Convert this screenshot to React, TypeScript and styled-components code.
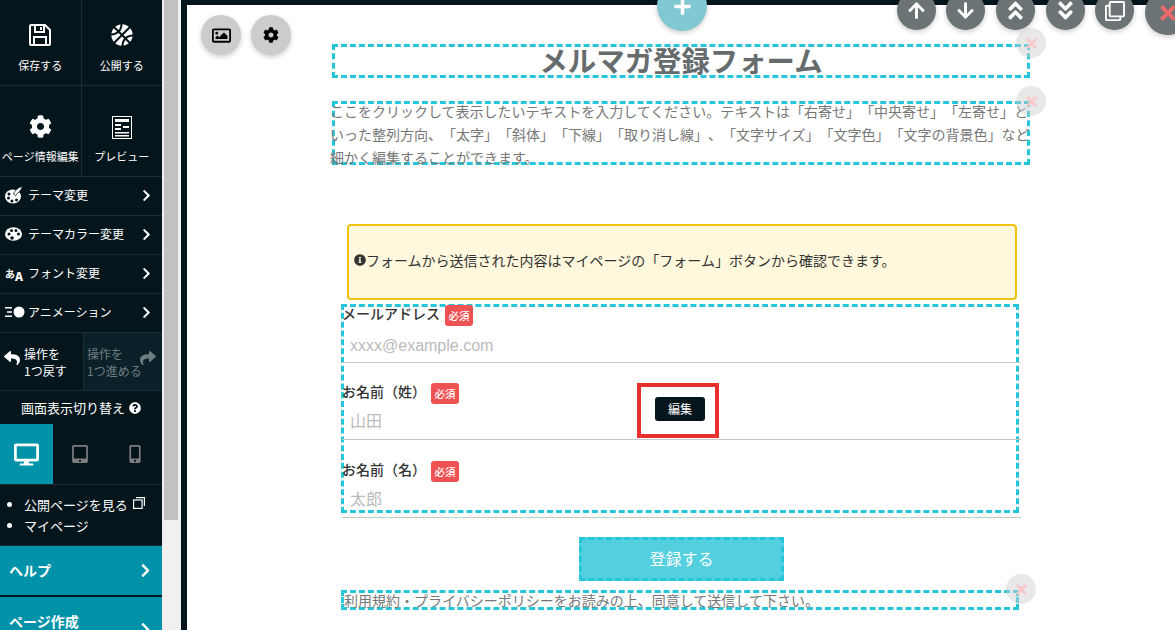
import React from "react";
import styled, { createGlobalStyle } from "styled-components";
import {
  FaAngleDoubleDown,
  FaAngleDoubleUp,
  FaArrowDown,
  FaArrowUp,
  FaBasketballBall,
  FaChevronRight,
  FaCog,
  FaDesktop,
  FaInfoCircle,
  FaMobileAlt,
  FaPlus,
  FaQuestionCircle,
  FaRegClone,
  FaRegImage,
  FaReply,
  FaShare,
  FaTabletAlt,
  FaTimes,
} from "react-icons/fa";

const jp = `"Noto Sans CJK JP", "Liberation Sans", sans-serif`;
const DARK = "#04151c";
const LINE = "#1c2d33";
const TEAL = "#0092a8";
const CYAN = "#26c6da";

const Global = createGlobalStyle`
  html, body { margin: 0; padding: 0; height: 630px; overflow: hidden; background: ${DARK}; }
  * { box-sizing: border-box; }
  body { font-family: ${jp}; text-spacing-trim: space-all; }
`;

const Page = styled.div`
  display: flex;
  width: 1175px;
  height: 630px;
  overflow: hidden;
  background: ${DARK};
`;

const Sidebar = styled.nav`
  width: 162px;
  flex: none;
  height: 630px;
  overflow: hidden;
  color: #fff;
  display: flex;
  flex-direction: column;
`;

const Track = styled.div`
  width: 19px;
  flex: none;
  background: #f0f0f0;
  padding-left: 2px;
`;

const Thumb = styled.div`
  width: 14px;
  height: 520px;
  background: #c1c1c1;
`;

const TileRow = styled.div<{ $h: number }>`
  display: flex;
  height: ${(p) => p.$h}px;
  flex: none;
  border-bottom: 1px solid ${LINE};
`;

const Tile = styled.button`
  flex: 1;
  min-width: 0;
  background: none;
  border: 0;
  padding: 0;
  color: #fff;
  font: 11px/16px ${jp};
  display: flex;
  flex-direction: column;
  align-items: center;
  justify-content: flex-end;
  white-space: nowrap;
  & + & { border-left: 1px solid ${LINE}; }
`;

const TileIcon = styled.span<{ $pb: number }>`
  display: flex;
  margin-bottom: ${(p) => p.$pb}px;
`;

const TileLabel = styled.span`
  padding-bottom: 12px;
`;

const MenuRow = styled.div`
  height: 39px;
  flex: none;
  display: flex;
  align-items: center;
  padding: 0 9px 2px 5px;
  font-size: 12px;
  line-height: 16px;
  border-bottom: 1px solid ${LINE};
`;

const MenuIcon = styled.span`
  width: 23px;
  flex: none;
  display: flex;
`;

const LangIcon = styled.span`
  width: 23px;
  flex: none;
  font-size: 10px;
  font-weight: 700;
  line-height: 12px;
  & b { font-size: 12px; position: relative; top: 3px; }
`;

const MenuText = styled.span`
  flex: 1;
`;

const Chevron = styled(FaChevronRight)`
  font-size: 13px;
`;

const HistoryRow = styled.div`
  display: flex;
  height: 58px;
  flex: none;
  border-bottom: 1px solid ${LINE};
`;

const HistoryButton = styled.div<{ $off?: boolean }>`
  flex: 1;
  width: 81px;
  display: flex;
  align-items: center;
  gap: ${(p) => (p.$off ? "0" : "4px")};
  padding: 0 ${(p) => (p.$off ? "0 0 3px" : "4px")};
  font-size: 12px;
  line-height: 17px;
  white-space: nowrap;
  color: ${(p) => (p.$off ? "#6f7c80" : "#fff")};
  background: ${(p) => (p.$off ? "#0b2129" : "transparent")};
  & + & { border-left: 1px solid ${LINE}; }
  & svg {
    font-size: 16px;
    flex: none;
    margin: ${(p) => (p.$off ? "-8px 0 0 -2px" : "-8px 0 0 0")};
  }
`;

const ViewTitle = styled.div`
  height: 33px;
  flex: none;
  display: flex;
  align-items: center;
  justify-content: center;
  gap: 4px;
  font-size: 13px;
  & svg { font-size: 12px; }
`;

const DeviceRow = styled.div`
  display: flex;
  height: 61px;
  flex: none;
  border-bottom: 1px solid ${LINE};
`;

const Device = styled.div<{ $active?: boolean }>`
  flex: none;
  width: ${(p) => (p.$active ? "53px" : "54.5px")};
  display: flex;
  align-items: center;
  justify-content: center;
  background: ${(p) => (p.$active ? TEAL : "transparent")};
  color: ${(p) => (p.$active ? "#fff" : "#7d7d7d")};
  & svg { font-size: ${(p) => (p.$active ? "25px" : "18px")}; }
`;

const LinkList = styled.ul`
  margin: 0;
  padding: 9px 0 0 24px;
  height: 61px;
  flex: none;
  font-size: 13px;
  line-height: 21px;
  border-bottom: 1px solid ${LINE};
`;

const LinkItem = styled.li`
  white-space: nowrap;
  & svg { margin-left: 5px; vertical-align: 1px; }
`;

const TealRow = styled.div<{ $h: number }>`
  height: ${(p) => p.$h}px;
  flex: none;
  background: ${TEAL};
  margin-bottom: 2px;
  display: flex;
  align-items: center;
  justify-content: space-between;
  padding: 0 9px 0 9px;
  font-size: 14px;
  font-weight: 700;
`;

const TealLabel = styled.span<{ $lift: number }>`
  margin-bottom: ${(p) => p.$lift}px;
`;

const TealChevron = styled(FaChevronRight)`
  font-size: 15px;
`;

const Main = styled.main`
  position: relative;
  margin: 5px 0 0 6px;
  flex: 1;
  height: 625px;
  background: #fff;
  display: flex;
  flex-direction: column;
  align-items: center;
`;

const Column = styled.div`
  width: 698px;
  display: flex;
  flex-direction: column;
`;

const Dashed = styled.div`
  border: 3px dashed ${CYAN};
`;

const TitleBox = styled(Dashed)`
  margin-top: 39px;
  height: 34px;
  text-align: center;
`;

const Title = styled.h1`
  margin: -2px -20px 0;
  font: 700 28.4px/29px ${jp};
  color: #666c6e;
`;

const TextBox = styled(Dashed)`
  margin-top: 23px;
  height: 64px;
`;

const BodyText = styled.p`
  margin: -4px -5px 0 -5px;
  font-size: 14px;
  line-height: 23px;
  color: #777;
`;

const Notice = styled.div`
  margin: 59px 13px 0 15px;
  height: 76px;
  background: #fff8dc;
  border: 2px solid #f1c40f;
  border-radius: 4px;
  display: flex;
  align-items: center;
  padding: 0 5px 4px;
  font-size: 14px;
  color: #333;
  & svg { font-size: 12px; flex: none; }
`;

const FormBox = styled(Dashed)`
  margin: 4px 11px 0 9px;
  height: 209px;
`;

const Field = styled.div<{ $h: number; $pt: number; $mt: number }>`
  height: ${(p) => p.$h}px;
  padding-top: ${(p) => p.$pt}px;
  margin: ${(p) => p.$mt}px -5px 0 -2px;
  border-bottom: 1px solid #c8c8c8;
`;

const FieldLabel = styled.div<{ $gap: number }>`
  display: flex;
  align-items: flex-start;
  gap: 5px;
  height: 21px;
  margin-bottom: ${(p) => p.$gap}px;
  font-size: 14px;
  line-height: 17px;
  font-weight: 500;
  color: #333;
`;

const Required = styled.span`
  width: 28px;
  height: 21px;
  border-radius: 3px;
  background: #ee5253;
  color: #fff;
  font-size: 10.5px;
  display: flex;
  align-items: center;
  justify-content: center;
`;

const FieldInput = styled.input`
  display: block;
  width: 100%;
  height: 28px;
  padding: 0 8px;
  border: 0;
  background: transparent;
  font: 16px/24px "Liberation Sans", ${jp};
  &::placeholder { color: #bbb; opacity: 1; }
`;

const Submit = styled.button`
  align-self: center;
  margin: 24px 0 0 1px;
  width: 205px;
  height: 44px;
  padding: 0 0 3px;
  background: #53cfdf;
  border: 3px dashed ${CYAN};
  color: #fff;
  font: 16px/24px ${jp};
`;

const Terms = styled(Dashed)`
  margin: 9px 11px 0 9px;
  height: 20px;
  font-size: 14px;
  line-height: 14px;
  color: #777;
  white-space: nowrap;
`;

const Fab = styled.button<{ $x: number; $y: number; $d: number; $bg: string; $fg: string; $fs: number; $flat?: boolean }>`
  position: absolute;
  left: ${(p) => p.$x - 187}px;
  top: ${(p) => p.$y - 5}px;
  width: ${(p) => p.$d}px;
  height: ${(p) => p.$d}px;
  border-radius: 50%;
  border: 0;
  padding: 0;
  display: flex;
  align-items: center;
  justify-content: center;
  background: ${(p) => p.$bg};
  color: ${(p) => p.$fg};
  font-size: ${(p) => p.$fs}px;
  box-shadow: ${(p) => (p.$flat ? "none" : "0 2px 5px rgba(0,0,0,0.2)")};
`;

const TopCover = styled.div`
  position: absolute;
  left: 0;
  right: 0;
  top: -5px;
  height: 5px;
  background: rgba(4, 21, 28, 0.9);
`;

const EditFrame = styled.div`
  position: absolute;
  left: ${637 - 187}px;
  top: ${383 - 5}px;
  width: 82px;
  height: 55px;
  border: 4px solid #e8302f;
  display: flex;
  align-items: center;
  justify-content: center;
`;

const EditButton = styled.button`
  width: 50px;
  height: 24px;
  margin: -4px 0 0 4px;
  border: 0;
  border-radius: 3px;
  background: #04151c;
  color: #fff;
  font: 12px/16px ${jp};
  padding: 0;
`;

const SaveIcon = () => (
  <svg width="22" height="22" viewBox="0 0 22 22" fill="none" stroke="#fff" strokeWidth="2">
    <path d="M2 1h14l5 5v14a1 1 0 0 1-1 1H2a1 1 0 0 1-1-1V2a1 1 0 0 1 1-1z" />
    <path d="M6 1v7h9V1M12 3v3" />
    <path d="M5 21v-8h12v8" />
  </svg>
);

const PreviewIcon = () => (
  <svg width="20" height="23" viewBox="0 0 20 23">
    <rect x="0.5" y="0.5" width="19" height="22" fill="#04151c" stroke="#fff" />
    <path d="M3 3h14v3H3zM3 8h6v2H3zM3 12h6v2H3zM11 10h6v2h-6zM3 16h14v1.5H3zM3 19h14v1.5H3z" fill="#fff" />
  </svg>
);

const BrushPalette = () => (
  <svg width="18" height="18" viewBox="0 0 18 18">
    <ellipse cx="8" cy="10.500" rx="8" ry="7" fill="#fff" />
    <path d="M17.500 0.500 C14 1 10 4 8.500 8 L10.500 9.500 C13 7 16.500 4 17.500 0.500z" fill="#fff" stroke={DARK} strokeWidth="0.8" />
    <g fill={DARK}>
      <circle cx="4" cy="8" r="1.500" />
      <circle cx="3.500" cy="12" r="1.500" />
      <circle cx="7" cy="15" r="1.500" />
      <circle cx="11.500" cy="14" r="1.500" />
    </g>
  </svg>
);

const OvalPalette = () => (
  <svg width="17" height="14" viewBox="0 0 17 14">
    <ellipse cx="8.500" cy="7" rx="8.500" ry="6.800" fill="#fff" />
    <g fill={DARK}>
      <circle cx="4" cy="7" r="1.500" />
      <circle cx="6.500" cy="3.500" r="1.500" />
      <circle cx="11" cy="3.500" r="1.500" />
      <circle cx="13.500" cy="7" r="1.500" />
      <circle cx="7" cy="11" r="1.800" />
    </g>
  </svg>
);

const AnimIcon = () => (
  <svg width="20" height="14" viewBox="0 0 20 14">
    <path d="M0 2h7v1.6H0zM2 6.200h5v1.6H2zM0 10.400h7V12H0z" fill="#fff" />
    <circle cx="14" cy="7" r="5.500" fill="#fff" />
  </svg>
);

const ExternalIcon = () => (
  <svg width="12" height="12" viewBox="0 0 12 12" fill="none" stroke="#fff" strokeWidth="1.200">
    <rect x="0.600" y="3" width="8.500" height="8.400" />
    <path d="M3 0.600h8.400V9" />
  </svg>
);

const fields = [
  { label: "メールアドレス", placeholder: "xxxx@example.com", h: 58, pt: 0, mt: -2, gap: 6 },
  { label: "お名前（姓）", placeholder: "山田", h: 77, pt: 20, mt: 0, gap: 4 },
  { label: "お名前（名）", placeholder: "太郎", h: 78, pt: 21, mt: 0, gap: 4 },
];

const actions = [
  { x: 897, icon: <FaArrowUp />, fs: 19 },
  { x: 946, icon: <FaArrowDown />, fs: 19 },
  { x: 996, icon: <FaAngleDoubleUp />, fs: 23 },
  { x: 1046, icon: <FaAngleDoubleDown />, fs: 23 },
  { x: 1095, icon: <FaRegClone />, fs: 20 },
];

const closers = [
  { x: 1016, y: 28 },
  { x: 1016, y: 86 },
  { x: 1006, y: 574 },
];

export default function App() {
  return (
    <Page>
      <Global />
      <Sidebar>
        <TileRow $h={86}>
          <Tile><TileIcon $pb={11}><SaveIcon /></TileIcon><TileLabel>保存する</TileLabel></Tile>
          <Tile><TileIcon $pb={11}><FaBasketballBall size={22} /></TileIcon><TileLabel>公開する</TileLabel></Tile>
        </TileRow>
        <TileRow $h={91}>
          <Tile><TileIcon $pb={10}><FaCog size={23} /></TileIcon><TileLabel>ページ情報編集</TileLabel></Tile>
          <Tile><TileIcon $pb={9}><PreviewIcon /></TileIcon><TileLabel>プレビュー</TileLabel></Tile>
        </TileRow>
        <MenuRow><MenuIcon><BrushPalette /></MenuIcon><MenuText>テーマ変更</MenuText><Chevron /></MenuRow>
        <MenuRow><MenuIcon><OvalPalette /></MenuIcon><MenuText>テーマカラー変更</MenuText><Chevron /></MenuRow>
        <MenuRow><LangIcon>あ<b>A</b></LangIcon><MenuText>フォント変更</MenuText><Chevron /></MenuRow>
        <MenuRow><MenuIcon><AnimIcon /></MenuIcon><MenuText>アニメーション</MenuText><Chevron /></MenuRow>
        <HistoryRow>
          <HistoryButton><FaReply /><span>操作を<br />1つ戻す</span></HistoryButton>
          <HistoryButton $off><span>操作を<br />1つ進める</span><FaShare /></HistoryButton>
        </HistoryRow>
        <ViewTitle>画面表示切り替え<FaQuestionCircle /></ViewTitle>
        <DeviceRow>
          <Device $active><FaDesktop /></Device>
          <Device><FaTabletAlt /></Device>
          <Device><FaMobileAlt /></Device>
        </DeviceRow>
        <LinkList>
          <LinkItem>公開ページを見る<ExternalIcon /></LinkItem>
          <LinkItem>マイページ</LinkItem>
        </LinkList>
        <TealRow $h={49}><TealLabel $lift={2}>ヘルプ</TealLabel><TealChevron /></TealRow>
        <TealRow $h={65}><TealLabel $lift={18}>ページ作成</TealLabel><TealChevron /></TealRow>
      </Sidebar>
      <Track><Thumb /></Track>
      <Main>
        <TopCover />
        <Column>
          <TitleBox><Title>メルマガ登録フォーム</Title></TitleBox>
          <TextBox>
            <BodyText>
              ここをクリックして表示したいテキストを入力してください。テキストは「右寄せ」「中央寄せ」「左寄せ」といった整列方向、「太字」「斜体」「下線」「取り消し線」、「文字サイズ」「文字色」「文字の背景色」など細かく編集することができます。
            </BodyText>
          </TextBox>
          <Notice><FaInfoCircle />フォームから送信された内容はマイページの「フォーム」ボタンから確認できます。</Notice>
          <FormBox>
            {fields.map((f) => (
              <Field key={f.label} $h={f.h} $pt={f.pt} $mt={f.mt}>
                <FieldLabel $gap={f.gap}>{f.label}<Required>必須</Required></FieldLabel>
                <FieldInput placeholder={f.placeholder} />
              </Field>
            ))}
          </FormBox>
          <Submit>登録する</Submit>
          <Terms>利用規約・プライバシーポリシーをお読みの上、同意して送信して下さい。</Terms>
        </Column>

        <Fab $x={201} $y={15} $d={40} $bg="#ccc" $fg="#000" $fs={19}><FaRegImage /></Fab>
        <Fab $x={251} $y={15} $d={40} $bg="#ccc" $fg="#000" $fs={16}><FaCog /></Fab>
        <Fab $x={657} $y={-19} $d={50} $bg="#80c9d3" $fg="#fff" $fs={19}><FaPlus /></Fab>
        {actions.map((a) => (
          <Fab key={a.x} $x={a.x} $y={-9} $d={39} $bg="#6b7375" $fg="#fff" $fs={a.fs}>{a.icon}</Fab>
        ))}
        <Fab $x={1145} $y={-10} $d={45} $bg="#6b7375" $fg="#e96a6a" $fs={22}><FaTimes /></Fab>
        {closers.map((c) => (
          <Fab key={c.y} $x={c.x} $y={c.y} $d={30} $bg="rgba(205,205,205,0.45)" $fg="#f9c9c9" $fs={15} $flat><FaTimes /></Fab>
        ))}
        <EditFrame><EditButton>編集</EditButton></EditFrame>
      </Main>
    </Page>
  );
}
